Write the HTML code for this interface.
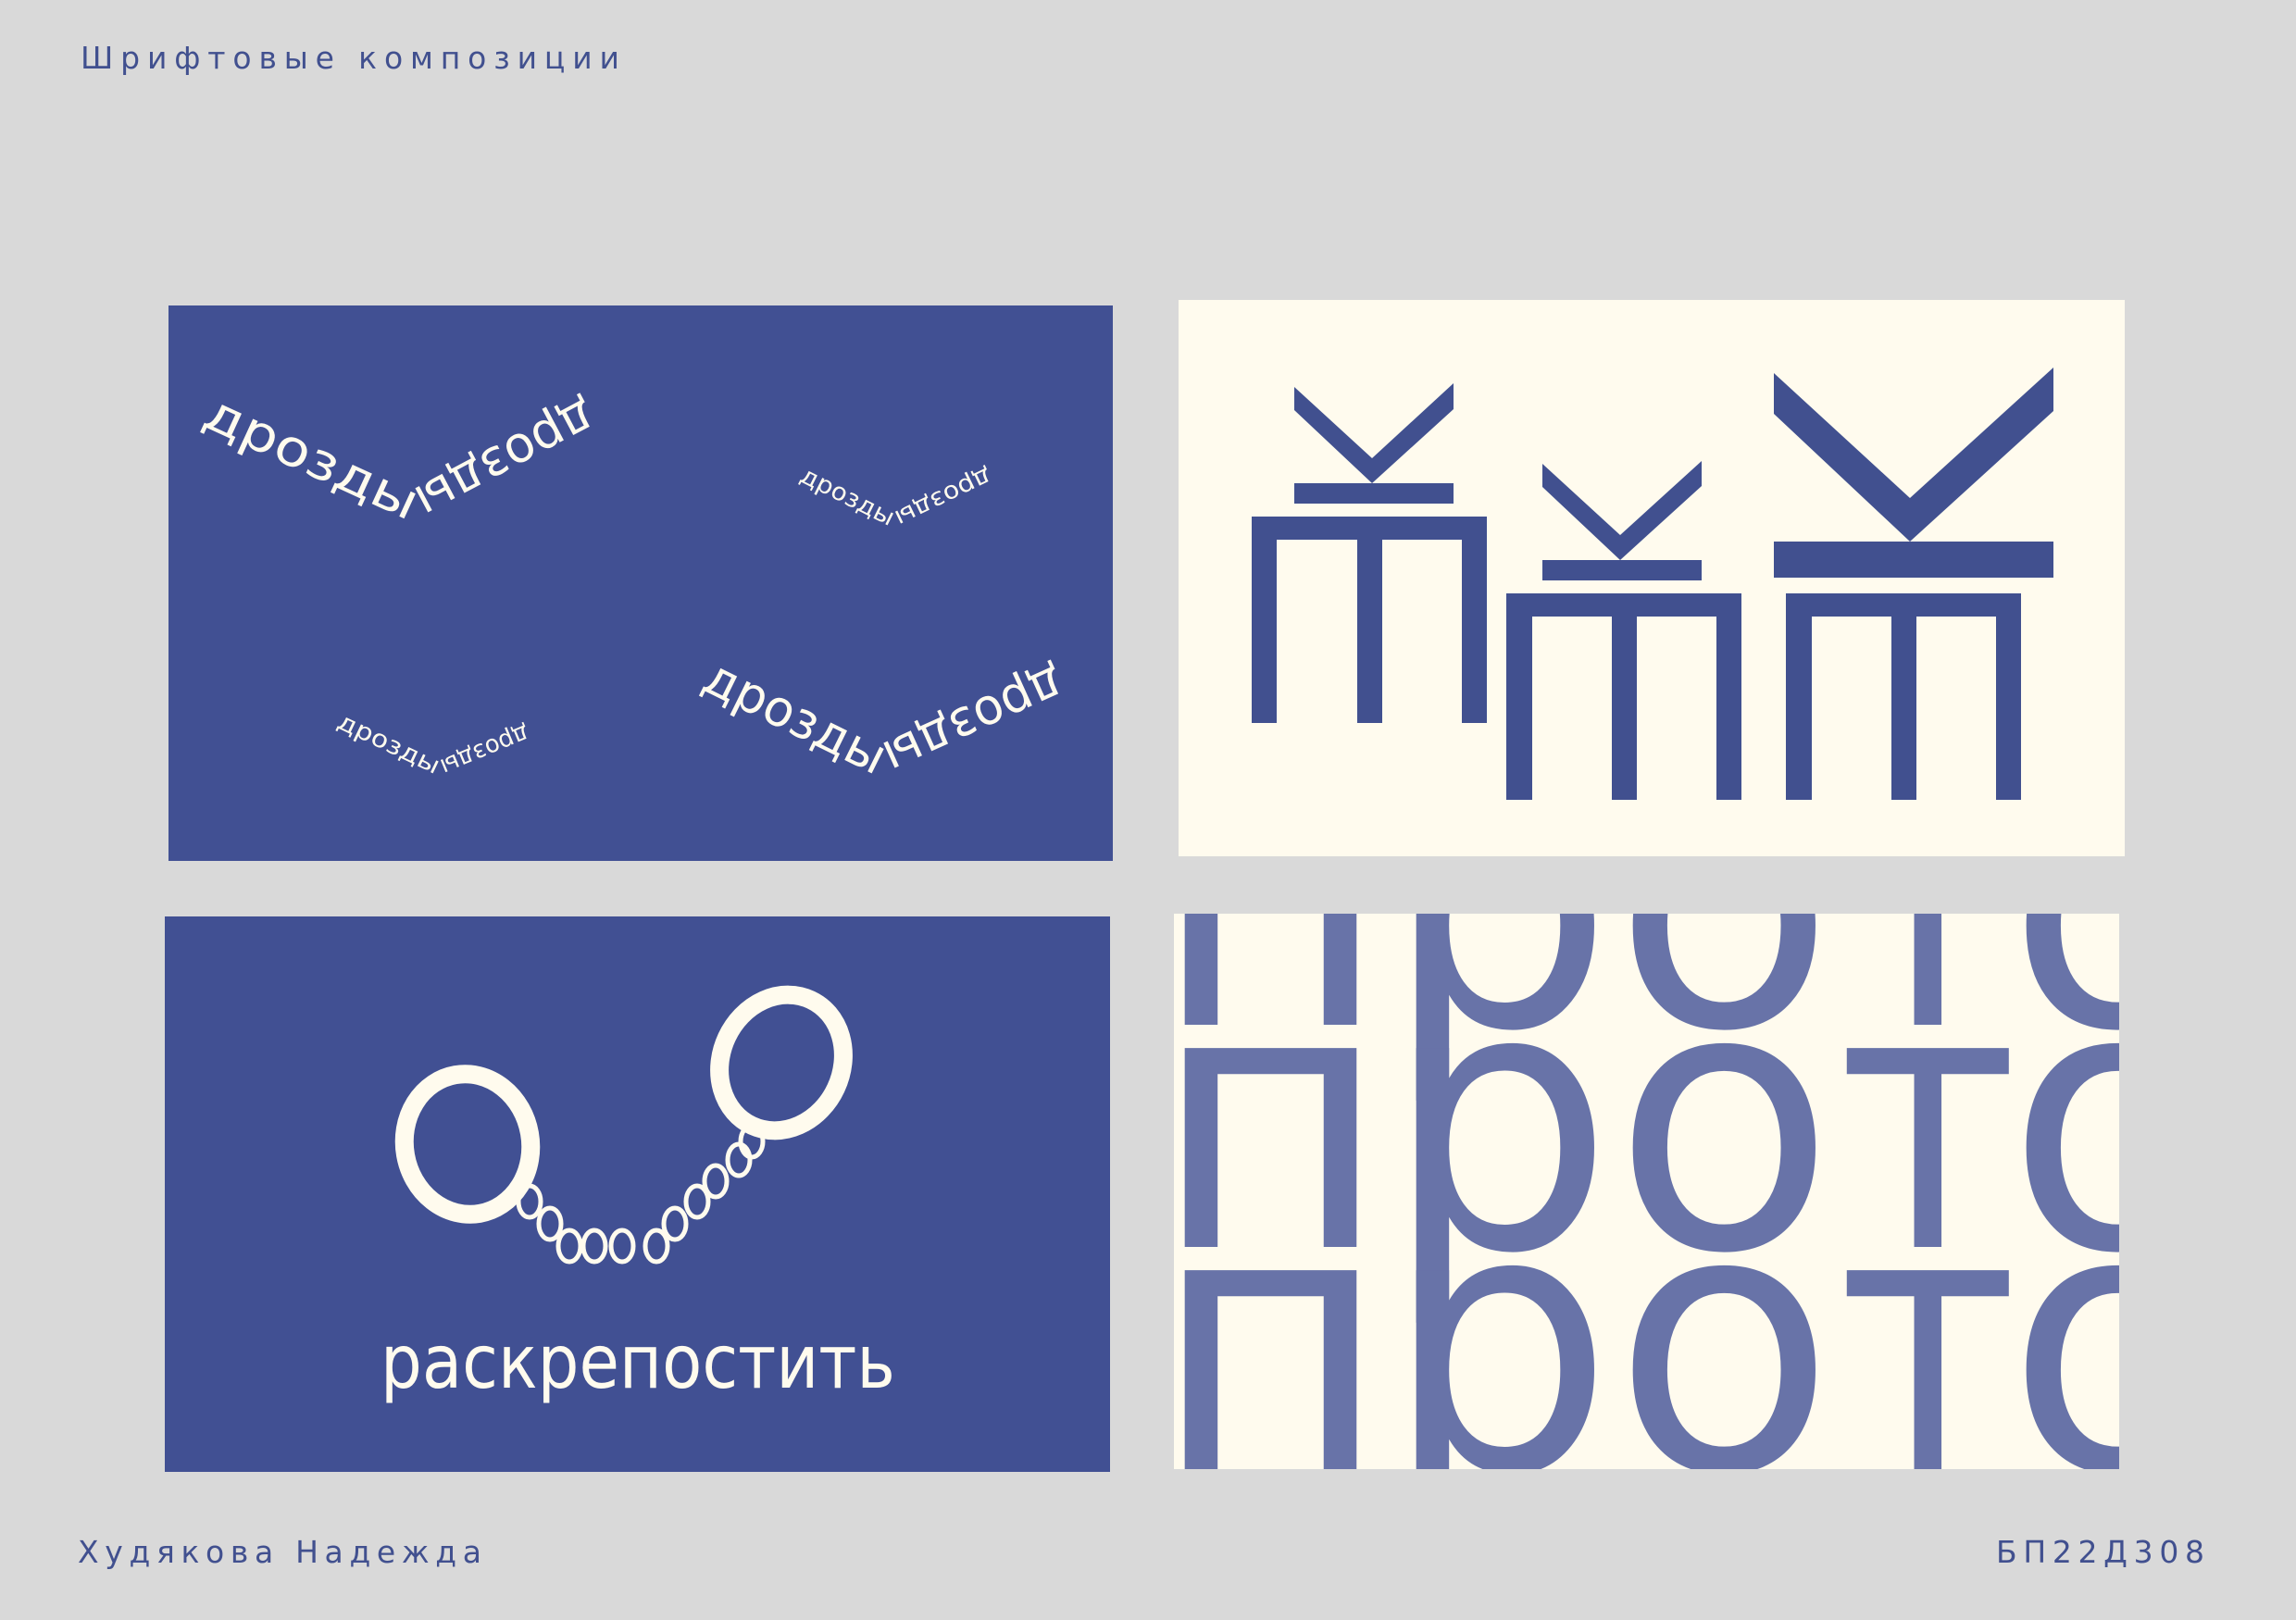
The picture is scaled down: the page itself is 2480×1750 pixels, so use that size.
<!DOCTYPE html>
<html><head><meta charset="utf-8"><style>
html,body{margin:0;padding:0;background:#d9d9d9;}
svg{display:block;}
</style></head><body>
<svg width="2480" height="1750" viewBox="0 0 2480 1750" xmlns="http://www.w3.org/2000/svg">
<defs>
<clipPath id="c4"><rect x="1268" y="987" width="1021" height="600"/></clipPath>
</defs>
<rect width="2480" height="1750" fill="#d9d9d9"/>

<g fill="#41508f" font-family="DejaVu Sans, Liberation Sans, sans-serif" font-size="33">
<text x="87" y="74" textLength="582" lengthAdjust="spacing">Шрифтовые композиции</text>
<text x="84" y="1688" textLength="436" lengthAdjust="spacing">Худякова Надежда</text>
<text x="2156" y="1688" textLength="225" lengthAdjust="spacing">БП22Д308</text>
</g>

<!-- Panel 1 -->
<rect x="182" y="330" width="1020" height="600" fill="#415093"/>
<g fill="#fffbee" font-family="DejaVu Sans, sans-serif" dominant-baseline="central">
<text font-size="54" transform="translate(224,442) rotate(24.7)" textLength="248" lengthAdjust="spacingAndGlyphs">дрозды</text>
<text font-size="54" transform="translate(641,446) rotate(152)" textLength="213" lengthAdjust="spacingAndGlyphs">дрозды</text>
<text font-size="26" transform="translate(866,512) rotate(26.6)" textLength="110" lengthAdjust="spacingAndGlyphs">дрозды</text>
<text font-size="26" transform="translate(1070,512) rotate(154.3)" textLength="113" lengthAdjust="spacingAndGlyphs">дрозды</text>
<text font-size="26" transform="translate(366,778) rotate(25.5)" textLength="119" lengthAdjust="spacingAndGlyphs">дрозды</text>
<text font-size="26" transform="translate(571,790) rotate(157.4)" textLength="102" lengthAdjust="spacingAndGlyphs">дрозды</text>
<text font-size="54" transform="translate(764,727) rotate(26.3)" textLength="212" lengthAdjust="spacingAndGlyphs">дрозды</text>
<text font-size="54" transform="translate(1148,735) rotate(155.6)" textLength="209" lengthAdjust="spacingAndGlyphs">дрозды</text>
</g>

<!-- Panel 2 -->
<rect x="1273" y="324" width="1022" height="601" fill="#fffbee"/>
<g fill="#41508f">
<polygon points="1398,418 1482,495 1570,414 1570,442 1482,522 1398,443"/>
<rect x="1398" y="522" width="172" height="22"/>
<rect x="1352" y="558" width="254" height="25"/>
<rect x="1352" y="558" width="27" height="223"/>
<rect x="1466" y="558" width="27" height="223"/>
<rect x="1579" y="558" width="27" height="223"/>

<polygon points="1666,501 1750,578 1838,498 1838,525 1750,605 1666,526"/>
<rect x="1666" y="605" width="172" height="22"/>
<rect x="1627" y="641" width="254" height="25"/>
<rect x="1627" y="641" width="28" height="223"/>
<rect x="1741" y="641" width="27" height="223"/>
<rect x="1854" y="641" width="27" height="223"/>

<polygon points="1916,403 2063,538 2218,397 2218,444 2063,585 1916,447"/>
<rect x="1916" y="585" width="302" height="39"/>
<rect x="1929" y="641" width="254" height="25"/>
<rect x="1929" y="641" width="28" height="223"/>
<rect x="2043" y="641" width="27" height="223"/>
<rect x="2156" y="641" width="27" height="223"/>
</g>

<!-- Panel 3 -->
<rect x="178" y="990" width="1021" height="600" fill="#415093"/>
<g fill="none" stroke="#fffbee">
<ellipse cx="505" cy="1236" rx="68" ry="76" stroke-width="20" transform="rotate(-10 505 1236)"/>
<ellipse cx="844" cy="1148" rx="65" ry="75" stroke-width="20" transform="rotate(25 844 1148)"/>
<g stroke-width="5">
<ellipse cx="572" cy="1298" rx="12" ry="17"/>
<ellipse cx="594" cy="1322" rx="12" ry="17"/>
<ellipse cx="615" cy="1346" rx="12" ry="17"/>
<ellipse cx="642" cy="1346" rx="12" ry="17"/>
<ellipse cx="672" cy="1346" rx="12" ry="17"/>
<ellipse cx="709" cy="1346" rx="12" ry="17"/>
<ellipse cx="729" cy="1322" rx="12" ry="17"/>
<ellipse cx="753" cy="1298" rx="12" ry="17"/>
<ellipse cx="773" cy="1276" rx="12" ry="17"/>
<ellipse cx="798" cy="1253" rx="12" ry="17"/>
<ellipse cx="812" cy="1233" rx="12" ry="17"/>
</g>
</g>
<text x="411" y="1499" fill="#fffbee" font-family="DejaVu Sans, sans-serif" font-size="80" textLength="556" lengthAdjust="spacingAndGlyphs">раскрепостить</text>

<!-- Panel 4 -->
<rect x="1268" y="987" width="1021" height="600" fill="#fffbee"/>
<g clip-path="url(#c4)" fill="#6873a8" font-family="DejaVu Sans, sans-serif" font-size="393">
<text y="1107"><tspan x="1244">п</tspan><tspan x="1494">р</tspan><tspan x="1742">о</tspan><tspan x="2167">о</tspan></text>
<text y="1347"><tspan x="1244">п</tspan><tspan x="1494">р</tspan><tspan x="1742">о</tspan><tspan x="2167">о</tspan></text>
<text y="1587"><tspan x="1244">п</tspan><tspan x="1494">р</tspan><tspan x="1742">о</tspan><tspan x="2167">о</tspan></text>
<text transform="translate(1985,0) scale(0.85,1)" y="1107" x="0">т</text>
<text transform="translate(1985,0) scale(0.85,1)" y="1347" x="0">т</text>
<text transform="translate(1985,0) scale(0.85,1)" y="1587" x="0">т</text>
</g>
</svg>
</body></html>
